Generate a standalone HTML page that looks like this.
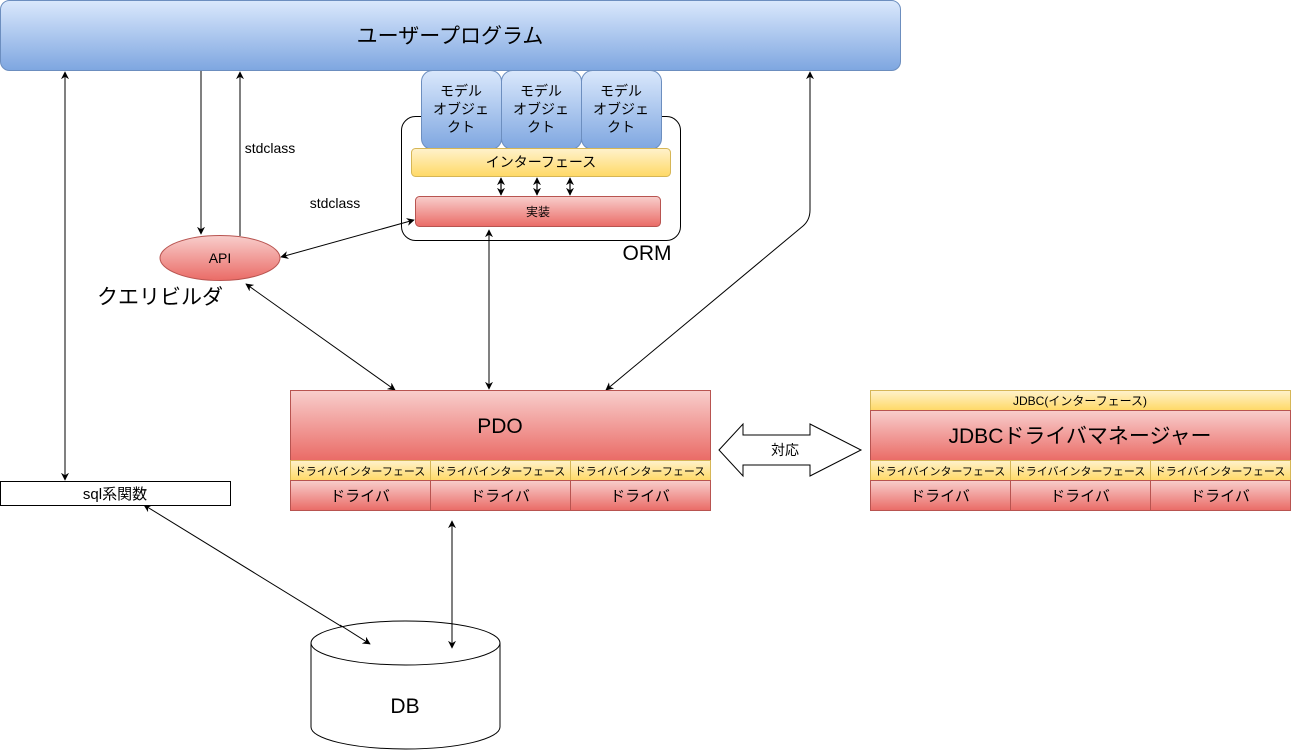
<!DOCTYPE html>
<html><head><meta charset="utf-8"><style>
html,body{margin:0;padding:0;background:#fff;width:1291px;height:751px;overflow:hidden}
svg text{font-family:"Liberation Sans","Noto Sans CJK JP",sans-serif;fill:#000}
</style></head><body>
<svg width="1291" height="751" viewBox="0 0 1291 751" xmlns="http://www.w3.org/2000/svg">
<defs>
<linearGradient id="b" x1="0" y1="0" x2="0" y2="1"><stop offset="0" stop-color="#dae8fc"/><stop offset="1" stop-color="#7ea6e0"/></linearGradient>
<linearGradient id="y" x1="0" y1="0" x2="0" y2="1"><stop offset="0" stop-color="#fff2cc"/><stop offset="1" stop-color="#ffd966"/></linearGradient>
<linearGradient id="r" x1="0" y1="0" x2="0" y2="1"><stop offset="0" stop-color="#f8cecc"/><stop offset="1" stop-color="#ea6b66"/></linearGradient>
<marker id="a" viewBox="0 0 10 10" refX="9" refY="5" markerWidth="8" markerHeight="8" orient="auto-start-reverse" markerUnits="userSpaceOnUse"><path d="M0,0 L10,5 L0,10 L3,5 z" fill="#000"/></marker>
</defs>

<!-- user program -->
<rect x="0.5" y="0.5" width="900" height="70" rx="9" fill="url(#b)" stroke="#6c8ebf"/>
<text x="450" y="43" font-size="21" text-anchor="middle">ユーザープログラム</text>

<!-- ORM container -->
<rect x="401.5" y="116.5" width="279" height="124" rx="14" fill="#fff" stroke="#000"/>
<text x="647" y="260" font-size="21" text-anchor="middle">ORM</text>

<!-- model objects -->
<g font-size="14" text-anchor="middle">
<rect x="421.5" y="70.5" width="80" height="79" rx="11" fill="url(#b)" stroke="#6c8ebf"/>
<rect x="501.5" y="70.5" width="80" height="79" rx="11" fill="url(#b)" stroke="#6c8ebf"/>
<rect x="581.5" y="70.5" width="80" height="79" rx="11" fill="url(#b)" stroke="#6c8ebf"/>
<text x="461" y="96">モデル</text><text x="461" y="114">オブジェ</text><text x="461" y="132">クト</text>
<text x="541" y="96">モデル</text><text x="541" y="114">オブジェ</text><text x="541" y="132">クト</text>
<text x="621" y="96">モデル</text><text x="621" y="114">オブジェ</text><text x="621" y="132">クト</text>
</g>
<rect x="411.5" y="148.5" width="259" height="28" rx="4" fill="url(#y)" stroke="#d6b656"/>
<text x="541" y="167" font-size="14" text-anchor="middle">インターフェース</text>
<rect x="415.5" y="196.5" width="245" height="30" rx="4" fill="url(#r)" stroke="#b85450"/>
<text x="538" y="216" font-size="12" text-anchor="middle">実装</text>

<g stroke="#000" stroke-width="1.2" fill="none">
<line x1="501" y1="178" x2="501" y2="195" marker-start="url(#a)" marker-end="url(#a)"/>
<line x1="537" y1="178" x2="537" y2="195" marker-start="url(#a)" marker-end="url(#a)"/>
<line x1="570" y1="178" x2="570" y2="195" marker-start="url(#a)" marker-end="url(#a)"/>
</g>

<!-- API -->
<ellipse cx="220" cy="258" rx="60" ry="22.5" fill="url(#r)" stroke="#b85450"/>
<text x="220" y="263" font-size="14" text-anchor="middle">API</text>
<text x="160" y="304" font-size="21" text-anchor="middle">クエリビルダ</text>
<text x="270" y="153" font-size="14" text-anchor="middle">stdclass</text>
<text x="335" y="208" font-size="14" text-anchor="middle">stdclass</text>

<!-- connectors -->
<g stroke="#000" stroke-width="1" fill="none">
<line x1="201" y1="71" x2="201" y2="234" marker-end="url(#a)"/>
<line x1="240" y1="236" x2="240" y2="72" marker-end="url(#a)"/>
<line x1="65" y1="72" x2="65" y2="480" marker-start="url(#a)" marker-end="url(#a)"/>
<path d="M810,72 L810,210 Q810,220 803,226 L606,390" marker-start="url(#a)" marker-end="url(#a)"/>
<line x1="281" y1="257" x2="414" y2="220" marker-start="url(#a)" marker-end="url(#a)"/>
<line x1="246" y1="284" x2="395" y2="390" marker-start="url(#a)" marker-end="url(#a)"/>
<line x1="489" y1="230" x2="489" y2="389" marker-start="url(#a)" marker-end="url(#a)"/>
<line x1="144" y1="505" x2="370" y2="644" marker-start="url(#a)" marker-end="url(#a)"/>
<line x1="452" y1="521" x2="452" y2="648" marker-start="url(#a)" marker-end="url(#a)"/>
</g>

<!-- PDO -->
<rect x="290.5" y="390.5" width="420" height="70" fill="url(#r)" stroke="#b85450"/>
<text x="500" y="433" font-size="21" text-anchor="middle">PDO</text>
<g stroke="#d6b656" fill="url(#y)">
<rect x="290.5" y="460.5" width="140" height="20"/><rect x="430.5" y="460.5" width="140" height="20"/><rect x="570.5" y="460.5" width="140" height="20"/>
</g>
<g stroke="#b85450" fill="url(#r)">
<rect x="290.5" y="480.5" width="140" height="30"/><rect x="430.5" y="480.5" width="140" height="30"/><rect x="570.5" y="480.5" width="140" height="30"/>
</g>
<g font-size="11" text-anchor="middle">
<text x="360" y="475">ドライバインターフェース</text><text x="500" y="475">ドライバインターフェース</text><text x="640" y="475">ドライバインターフェース</text>
</g>
<g font-size="15" text-anchor="middle">
<text x="360" y="501">ドライバ</text><text x="500" y="501">ドライバ</text><text x="640" y="501">ドライバ</text>
</g>

<!-- double arrow -->
<path d="M719,450 L743,424 L743,435 L810,435 L810,424 L861,450 L810,476 L810,465 L743,465 L743,476 Z" fill="#fff" stroke="#000"/>
<text x="785" y="455" font-size="14" text-anchor="middle">対応</text>

<!-- JDBC -->
<rect x="870.5" y="390.5" width="420" height="20" fill="url(#y)" stroke="#d6b656"/>
<text x="1080" y="405" font-size="12" text-anchor="middle">JDBC(インターフェース)</text>
<rect x="870.5" y="410.5" width="420" height="50" fill="url(#r)" stroke="#b85450"/>
<text x="1080" y="443" font-size="21" text-anchor="middle">JDBCドライバマネージャー</text>
<g stroke="#d6b656" fill="url(#y)">
<rect x="870.5" y="460.5" width="140" height="20"/><rect x="1010.5" y="460.5" width="140" height="20"/><rect x="1150.5" y="460.5" width="140" height="20"/>
</g>
<g stroke="#b85450" fill="url(#r)">
<rect x="870.5" y="480.5" width="140" height="30"/><rect x="1010.5" y="480.5" width="140" height="30"/><rect x="1150.5" y="480.5" width="140" height="30"/>
</g>
<g font-size="11" text-anchor="middle">
<text x="940" y="475">ドライバインターフェース</text><text x="1080" y="475">ドライバインターフェース</text><text x="1220" y="475">ドライバインターフェース</text>
</g>
<g font-size="15" text-anchor="middle">
<text x="940" y="501">ドライバ</text><text x="1080" y="501">ドライバ</text><text x="1220" y="501">ドライバ</text>
</g>

<!-- sql functions -->
<rect x="0.5" y="481.5" width="230" height="24" fill="#fff" stroke="#000"/>
<text x="115" y="499" font-size="15" text-anchor="middle">sql系関数</text>

<!-- DB -->
<path d="M311,643 A94.5,22 0 0 1 500,643 L500,727 A94.5,22 0 0 1 311,727 Z" fill="#fff" stroke="#000"/>
<path d="M311,643 A94.5,22 0 0 0 500,643" fill="none" stroke="#000"/>
<line x1="370" y1="644" x2="370" y2="644" stroke="none"/>
<text x="405" y="713" font-size="21" text-anchor="middle">DB</text>
<g stroke="#000" stroke-width="1" fill="none">
<line x1="340" y1="625" x2="370" y2="644" marker-end="url(#a)"/>
<line x1="452" y1="620" x2="452" y2="648" marker-end="url(#a)"/>
</g>
</svg>
</body></html>
